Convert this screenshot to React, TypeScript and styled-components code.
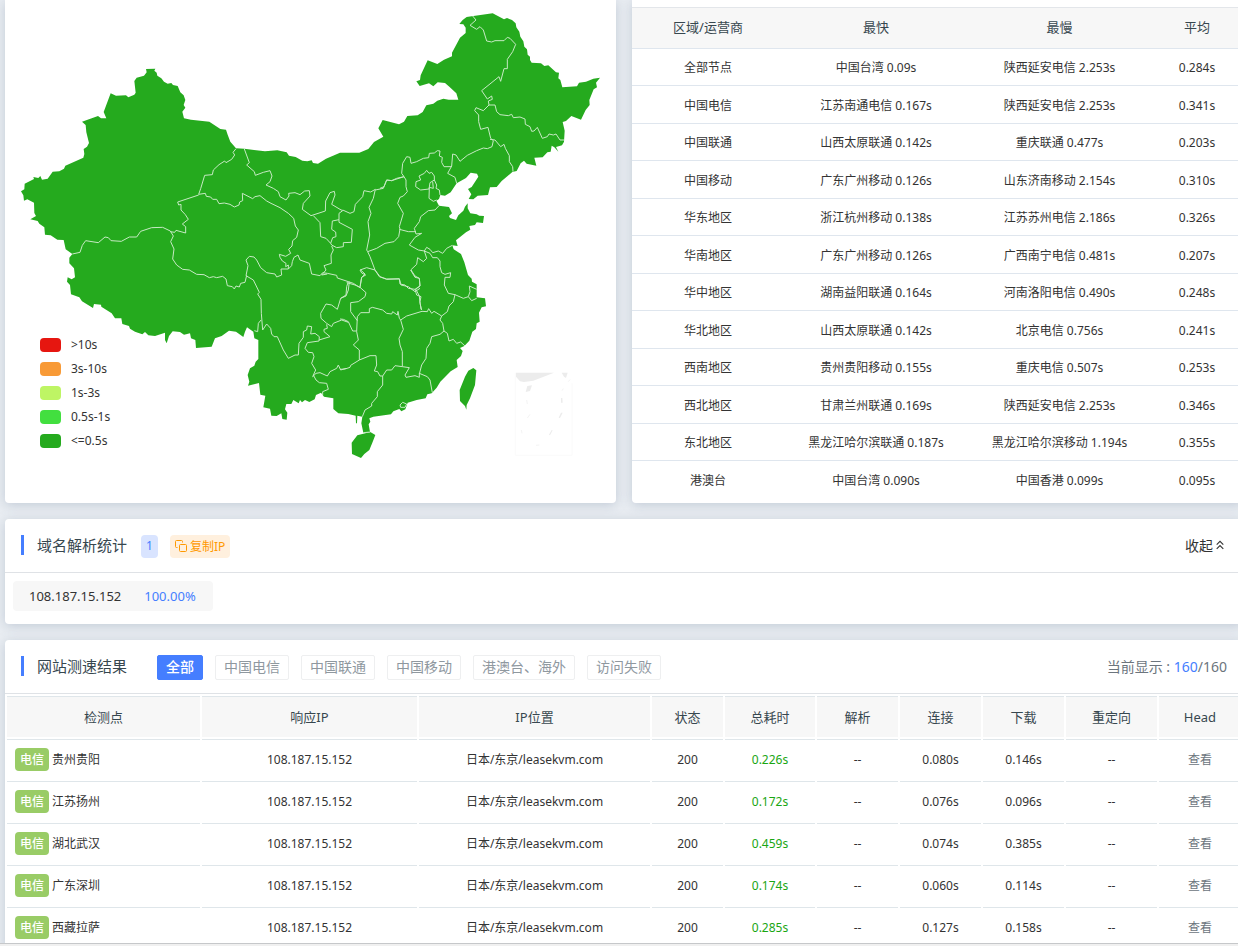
import React from 'react';
import styled, { createGlobalStyle } from 'styled-components';

const BLUE = '#457eff';
const GREEN = '#25aa1e';

const GlobalStyle = createGlobalStyle`
  *, *::before, *::after { box-sizing: border-box; }
  body {
    margin: 0;
    background: #e9edf2;
    color: #333;
    font-family: "Noto Sans", "Noto Sans CJK SC", sans-serif;
    font-size: 12px;
    line-height: 18px;
  }
  button { font-family: inherit; cursor: pointer; }
  a { text-decoration: none; }
`;

const Shell = styled.div`
  display: flex;
  flex-direction: column;
  height: 100vh;
  overflow: hidden;
`;

const Page = styled.main`
  flex: 1;
  min-height: 0;
  overflow: hidden;
`;

const Content = styled.div`
  display: flex;
  flex-direction: column;
  gap: 16px;
  margin-right: -5px;
  padding-left: 5px;
`;

const ScrollEdge = styled.div`
  flex: none;
  height: 3px;
  border-top: 1px solid #c6c8ca;
  background: #f0f0f0;
`;

const Overview = styled.div`
  display: grid;
  grid-template-columns: 1fr 1fr;
  gap: 16px;
`;

const Card = styled.section<{ $cut?: boolean }>`
  border-radius: ${(p) => (p.$cut ? '0 0 4px 4px' : '4px')};
  background: #fff;
  box-shadow: 0 2px 12px rgba(90, 110, 140, 0.27);
`;

const MapCard = styled(Card)`
  position: relative;
`;

const MapSvg = styled.svg`
  display: block;
  width: 100%;
`;

const Legend = styled.ul`
  position: absolute;
  left: 35px;
  bottom: 50px;
  display: flex;
  flex-direction: column;
  margin: 0;
  padding: 0;
  list-style: none;
`;

const LegendItem = styled.li`
  display: flex;
  align-items: center;
  gap: 10px;
  height: 24px;
  line-height: 20px;
`;

const Swatch = styled.span<{ $color: string }>`
  width: 21px;
  height: 14px;
  border-radius: 4px;
  background: ${(p) => p.$color};
`;

const RegionCard = styled(Card)`
  padding: 7px 0 4px;
`;

const RegionTable = styled.table`
  width: 100%;
  table-layout: fixed;
  border-spacing: 0;
  text-align: center;

  th, td { padding: 0; }
  th {
    height: 42px;
    padding-bottom: 2px;
    border-top: 1px solid #e3e6ea;
    border-bottom: 1px solid #dfe6ee;
    background: #f7f7f7;
    color: #37474f;
    font-size: 13px;
    font-weight: 400;
  }
  td {
    padding-top: 2px;
    border-bottom: 1px solid #dfe6ee;
  }
  tbody tr:nth-child(odd) td { height: 37px; }
  tbody tr:nth-child(even) td { height: 38px; }
  tbody tr:last-child td { border-bottom: 0; }
`;

const CardHeader = styled.header`
  display: flex;
  align-items: center;
  height: 54px;
  padding: 2px 16px 0;
  border-bottom: 1px solid #dfe2e6;
`;

const Title = styled.h2`
  display: flex;
  align-items: flex-start;
  gap: 13px;
  height: 23px;
  margin: 0;
  color: #37474f;
  font-size: 15px;
  font-weight: 400;
  line-height: 20px;

  &::before {
    content: "";
    width: 3px;
    height: 20px;
    background: ${BLUE};
  }
`;

const Count = styled.span`
  margin: 0 12px 0 14px;
  padding-bottom: 1px;
  width: 17px;
  border-radius: 4px;
  background: #d9e4ff;
  color: ${BLUE};
  line-height: 22px;
  text-align: center;
`;

const CopyButton = styled.button`
  display: flex;
  align-items: center;
  gap: 3px;
  height: 23px;
  padding: 0 5px 1px;
  border: 0;
  border-radius: 4px;
  background: #fff0de;
  color: #ff9900;
  font-size: 12px;
  white-space: nowrap;
`;

const CollapseButton = styled.button`
  display: flex;
  align-items: center;
  gap: 3px;
  margin-left: auto;
  padding: 0 3px 4px;
  border: 0;
  background: none;
  color: #333;
  font-size: 14px;
`;

const ChipRow = styled.div`
  display: flex;
  padding: 8px 8px 13px;
`;

const IpChip = styled.div`
  display: flex;
  gap: 23px;
  width: 200px;
  padding: 0 16px;
  border-radius: 4px;
  background: #f7f7f7;
  font-size: 13px;
  line-height: 30px;
`;

const Accent = styled.span`
  color: ${BLUE};
`;

const Filters = styled.nav`
  display: flex;
  gap: 12px;
  margin-left: 30px;
`;

const FilterButton = styled.button<{ $active: boolean }>`
  height: 25px;
  padding: 0 8px 2px;
  border: 1px solid ${(p) => (p.$active ? BLUE : '#eeeff0')};
  border-radius: 2px;
  background: ${(p) => (p.$active ? BLUE : '#fff')};
  color: ${(p) => (p.$active ? '#fff' : '#8f989f')};
  font-size: 14px;
  font-weight: ${(p) => (p.$active ? 500 : 400)};
  line-height: 21px;
  white-space: nowrap;
`;

const Shown = styled.span`
  margin-left: auto;
  padding-bottom: 2px;
  color: #6c757d;
  font-size: 14px;
`;

const ResultTable = styled.table`
  width: 100%;
  table-layout: fixed;
  border-spacing: 2px;
  text-align: center;

  th, td { padding: 0; border-top: 1px solid #dfe6ea; }
  th {
    height: 41px;
    background: #f7f7f7;
    color: #37474f;
    font-size: 13px;
    font-weight: 400;
  }
  td { height: 40px; }
`;

const Node = styled.div`
  display: flex;
  align-items: center;
  gap: 3px;
  padding-left: 8px;
`;

const Carrier = styled.span`
  padding: 0 5px;
  border-radius: 4px;
  background: #99cc66;
  color: #fff;
  font-weight: 500;
  line-height: 23px;
`;

const Total = styled.span`
  color: #1aa613;
`;

const HeadLink = styled.a`
  color: #6c757d;
`;

const legend = [
  ['#e61610', '>10s'],
  ['#f89a36', '3s-10s'],
  ['#bef564', '1s-3s'],
  ['#42df3f', '0.5s-1s'],
  [GREEN, '<=0.5s'],
];

const regions = [
  ['全部节点', '中国台湾 0.09s', '陕西延安电信 2.253s', '0.284s'],
  ['中国电信', '江苏南通电信 0.167s', '陕西延安电信 2.253s', '0.341s'],
  ['中国联通', '山西太原联通 0.142s', '重庆联通 0.477s', '0.203s'],
  ['中国移动', '广东广州移动 0.126s', '山东济南移动 2.154s', '0.310s'],
  ['华东地区', '浙江杭州移动 0.138s', '江苏苏州电信 2.186s', '0.326s'],
  ['华南地区', '广东广州移动 0.126s', '广西南宁电信 0.481s', '0.207s'],
  ['华中地区', '湖南益阳联通 0.164s', '河南洛阳电信 0.490s', '0.248s'],
  ['华北地区', '山西太原联通 0.142s', '北京电信 0.756s', '0.241s'],
  ['西南地区', '贵州贵阳移动 0.155s', '重庆电信 0.507s', '0.253s'],
  ['西北地区', '甘肃兰州联通 0.169s', '陕西延安电信 2.253s', '0.346s'],
  ['东北地区', '黑龙江哈尔滨联通 0.187s', '黑龙江哈尔滨移动 1.194s', '0.355s'],
  ['港澳台', '中国台湾 0.090s', '中国香港 0.099s', '0.095s'],
];

const filters = ['全部', '中国电信', '中国联通', '中国移动', '港澳台、海外', '访问失败'];

const columns: [string, number][] = [
  ['检测点', 193],
  ['响应IP', 215],
  ['IP位置', 231],
  ['状态', 71],
  ['总耗时', 90],
  ['解析', 81],
  ['连接', 81],
  ['下载', 81],
  ['重定向', 91],
  ['Head', 82],
];

const results = [
  ['贵州贵阳', '0.226s', '0.080s', '0.146s'],
  ['江苏扬州', '0.172s', '0.076s', '0.096s'],
  ['湖北武汉', '0.459s', '0.074s', '0.385s'],
  ['广东深圳', '0.174s', '0.060s', '0.114s'],
  ['西藏拉萨', '0.285s', '0.127s', '0.158s'],
];

const mainland =
  'M438,207 466,206 463,212 470,218 472,227 484,235 492,245 503,251 514,249 519,255 533,258 541,277 551,286 556,300 551,315 556,323 547,335 552,355 573,359 628,365 661,387 678,389 683,404 691,425 708,445 733,446 795,454 832,451 860,457 867,467 887,471 907,482 922,484 935,481 939,489 954,491 978,476 1020,458 1078,458 1105,447 1122,426 1150,410 1135,385 1148,360 1197,373 1212,365 1222,348 1253,346 1268,336 1279,316 1300,311 1312,302 1330,296 1346,299 1375,299 1369,280 1348,260 1335,249 1313,247 1300,259 1287,250 1259,258 1249,244 1260,240 1262,226 1283,181 1312,192 1332,179 1356,169 1356,158 1364,143 1380,113 1397,99 1397,83 1390,73 1378,72 1388,60 1400,51 1415,49 1478,40 1512,58 1521,54 1536,60 1547,70 1549,82 1558,95 1561,110 1570,124 1573,140 1581,148 1583,164 1590,170 1590,180 1595,188 1623,190 1633,198 1645,196 1668,217 1677,218 1675,235 1681,240 1687,262 1731,259 1737,248 1758,245 1780,236 1800,233 1788,248 1791,262 1781,268 1768,300 1769,315 1757,330 1743,359 1714,348 1698,363 1688,366 1694,392 1692,425 1686,436 1668,441 1675,455 1663,442 1655,437 1652,455 1642,457 1628,472 1603,473 1609,497 1580,491 1572,482 1562,490 1550,513 1537,516 1505,543 1490,561 1470,562 1464,585 1433,587 1420,598 1406,597 1414,583 1404,567 1415,561 1435,530 1431,521 1412,518 1398,534 1370,550 1352,577 1335,587 1321,585 1317,597 1309,602 1317,617 1347,621 1356,640 1347,648 1350,654 1368,660 1375,646 1390,632 1395,620 1403,610 1403,625 1411,640 1430,643 1438,647 1452,648 1449,669 1430,667 1425,675 1408,678 1411,689 1398,697 1368,721 1373,738 1357,736 1361,748 1383,762 1393,787 1404,825 1415,836 1416,845 1430,853 1430,892 1455,895 1458,919 1445,922 1437,938 1439,965 1430,970 1428,987 1417,995 1408,1022 1393,1038 1380,1044 1388,1053 1383,1068 1370,1080 1373,1101 1352,1114 1321,1145 1310,1163 1295,1180 1282,1183 1277,1195 1250,1200 1223,1208 1216,1228 1204,1234 1198,1227 1180,1234 1173,1243 1120,1250 1108,1255 1111,1265 1106,1273 1110,1296 1090,1298 1084,1270 1087,1250 1072,1247 1071,1270 1068,1270 1067,1247 1045,1242 1015,1240 1000,1227 1000,1195 972,1190 963,1178 948,1185 944,1198 928,1206 915,1200 906,1207 900,1200 896,1210 880,1200 874,1212 859,1212 855,1228 862,1238 860,1259 847,1257 844,1240 830,1248 814,1247 810,1226 790,1222 796,1187 781,1184 777,1149 744,1157 748,1145 743,1125 750,1105 763,1097 767,1085 775,1077 775,1020 763,1015 760,995 741,982 735,995 730,1011 708,995 687,992 665,1008 645,1015 635,1040 588,1044 586,1020 573,1015 570,1000 552,1004 540,996 518,994 507,1008 500,1030 495,1020 495,998 465,1008 445,1006 435,996 427,1003 405,995 390,986 387,978 367,972 364,955 345,955 335,940 304,920 303,914 282,912 279,924 246,904 238,892 213,883 210,855 201,845 203,832 215,838 225,832 222,805 208,790 208,773 217,762 197,748 191,720 172,719 152,706 135,704 133,682 118,671 113,663 91,658 108,648 103,639 102,608 82,598 72,602 70,586 63,574 73,568 74,551 102,537 100,531 115,534 121,528 126,539 143,536 158,515 178,514 192,506 196,497 250,473 253,462 251,447 261,440 267,429 259,397 257,375 246,365 294,348 303,355 319,355 311,336 332,280 348,287 378,286 385,292 403,284 407,278 403,243 410,233 432,227 440,217Z';

const hainan = 'M1111,1296 1126,1305 1117,1328 1108,1350 1093,1362 1083,1374 1056,1362 1055,1328 1072,1306Z';
const taiwan = 'M1420,1104 1429,1111 1425,1155 1410,1195 1400,1215 1399,1229 1395,1218 1380,1203 1379,1170 1395,1130 1405,1112Z';

// Province borders, grouped by the part of the country they run through.
const borders: { x: number; y: number; d: string }[] = [
  {
    x: 0,
    y: 120,
    d: 'M708,326 699,337 704,345 695,358 678,368 674,363 657,374 640,390 637,404 614,406 602,446 596,463 M596,465 533,486 536,495 543,493 543,510 556,524 565,538 547,552 557,560 557,579 528,571 524,577 511,575 M217,642 240,637 247,616 257,602 295,608 315,591 325,593 333,602 364,604 388,591 410,591 422,574 455,563 488,562 511,573 520,588 512,605 522,627 518,657 530,675 548,688 568,690 590,703 612,704 628,713 640,710 650,713 668,709 678,717 682,737 697,740 703,747 708,738 718,741 722,730 735,727 740,706 M596,463 616,460 619,469 632,471 638,478 650,478 657,491 673,489 690,493 703,501 717,495 719,486 728,482 727,460',
  },
  {
    x: 660,
    y: 360,
    d: 'M67,220 98,236 105,230 120,227 140,243 153,250 180,263 205,280 221,295 226,318 235,330 230,352 218,362 216,378 206,388 212,400 197,409 178,403 180,412 187,423 198,430 197,440 205,435 205,447 183,447 185,465 170,471 165,462 140,458 122,443 110,420 102,411 88,409 78,420 84,437 78,467 M205,447 215,437 217,425 222,412 234,405 240,420 268,430 275,462 300,467 308,458 322,460 350,466 352,474 385,485 400,490 420,503 M73,87 88,128 80,135 103,155 106,166 130,157 150,152 156,168 150,185 138,195 160,205 175,215 180,230 198,240 207,228 206,220 225,218 240,224 254,213 268,212 270,228 250,250 247,268 273,287 316,273 317,243 330,218 343,214 345,225 335,253 360,268 368,272 357,280 357,299 M280,287 300,308 302,350 318,355 332,370 338,353 348,350 347,336 335,328 337,303 357,299 357,307 397,328 394,367 370,368 370,380 350,383 335,375 332,370 M368,270 390,280 402,275 406,253 428,230 432,212 452,216 466,208 M335,378 340,390 333,405 334,430 312,437 318,450 305,465 322,462 M466,208 460,235 447,262 453,280 444,305 449,345 440,390 443,395 450,410 465,450 M420,503 425,472 437,465 425,459 420,450 440,443 465,450 M466,210 490,205 500,180 515,182 530,175 552,170 558,180 558,200 562,215 550,228 540,232 533,250 550,280 538,320 540,327 536,350 522,365 495,370 470,385 443,395 M465,450 478,470 500,478 538,476 543,495 565,500 585,515 600,505 M385,485 380,500 378,525 362,535',
  },
  {
    x: 1140,
    y: 0,
    d: 'M278,48 288,60 270,76 290,88 300,80 310,90 320,123 335,126 345,122 372,122 382,112 390,115 407,133 398,155 382,178 382,206 372,206 362,244 357,230 305,272 322,297 335,288 337,298 325,303 327,315 310,332 288,323 284,332 296,345 296,365 302,388 324,382 332,415 340,422 M327,315 345,315 350,335 360,344 385,347 395,343 400,353 420,351 435,357 436,373 450,380 455,394 462,393 472,382 487,415 502,410 507,402 520,405 528,402 540,420 552,420 M330,418 345,420 362,440 372,433 376,445 388,467 388,485 398,500 399,515 M340,422 336,440 322,446 310,444 290,452 262,466 240,484 228,465 218,462 215,498 203,520 225,532 230,550 M215,500 192,500 185,487 187,472 178,468 180,453 172,452 163,459 148,460 146,473 130,475 110,485 93,490 90,472 80,470 68,490 65,520 72,530 M140,511 147,520 155,517 163,528 163,540 150,548 147,567 122,570 107,560 108,545 122,540 117,528 133,520 140,511 M158,545 160,565 148,562 147,595 160,604 170,600 M163,540 170,555 168,565 178,570 180,585 M0,565 12,560 20,540 35,542 72,530',
  },
  {
    x: 1140,
    y: 480,
    d: 'M177,137 165,150 145,152 122,170 118,185 103,205 108,222 125,220 105,232 88,255 115,270 133,273 140,262 150,268 158,278 175,273 188,280 200,265 217,256 M58,208 85,215 108,215 M133,273 140,295 130,305 113,293 110,313 92,330 105,352 118,355 120,378 107,387 118,408 120,430 125,450 M133,273 150,280 158,293 172,293 180,303 180,320 185,338 195,343 212,338 210,352 195,352 193,375 205,400 225,404 250,415 265,410 270,395 268,378 290,388 M265,410 275,422 290,415',
  },
  {
    x: 1020,
    y: 810,
    d: 'M345,74 340,95 327,108 322,125 305,138 M243,118 240,95 243,80 230,75 225,58 205,55 195,45 180,42 178,27 140,27 120,20 105,0 M225,58 240,48 238,25 225,18 213,0 M182,150 200,138 246,124 262,125 266,116 275,130 282,124 305,138 300,150 308,160 312,183 322,190 327,213 340,208 350,220 362,216 375,228 M312,183 300,193 275,200 270,220 260,235 258,265 245,285 238,312 M182,150 190,178 177,205 180,225 187,245 187,290 165,287 155,300 140,300 128,318 M187,290 208,293 195,315 198,322 225,317 238,322 238,310 262,320 270,330 277,368 M52,140 62,128 88,128 88,116 97,112 128,120 140,130 155,132 158,125 172,135 174,124 178,145 182,150 M52,140 50,185 55,210 40,225 58,240 58,270 90,257 108,257 110,285 103,303 113,305 120,318 128,318 128,345 112,365 112,380 95,400 95,408 75,420 67,440 M0,298 15,297 30,292 32,286 58,270 M20,38 45,45 60,52 78,68 75,80 55,95 32,98 32,125 52,152 M60,50 65,22 75,12 62,0 M180,405 188,397 200,402 195,412 182,412 180,405 M0,147 10,148 25,155 38,183 50,183 M70,488 91,486',
  },
  {
    x: 660,
    y: 780,
    d: 'M78,47 100,60 118,97 113,102 123,118 124,160 128,210 140,192 152,205 155,222 162,230 172,230 190,270 205,295 225,285 235,285 237,250 250,232 250,215 260,210 262,198 275,200 272,222 285,220 298,230 297,243 262,248 255,265 265,277 278,278 282,290 275,310 287,330 278,350 288,340 300,338 322,348 330,335 350,325 355,315 362,330 378,325 M103,212 113,215 115,190 123,180 M388,65 385,90 378,108 362,115 352,148 335,135 318,132 302,160 303,175 320,190 335,200 340,190 365,180 385,187 M297,240 330,230 312,215 312,208 322,205 320,193 M280,345 288,360 298,368 320,370 325,388 308,395 308,405',
  },
];

const seaShapes =
  'M1548,1118 1662,1118 1600,1142 1572,1146 1560,1144 1548,1130Z M1685,1118 1703,1118 1698,1134 1692,1130Z M1582,1158 1596,1156 1590,1173 1577,1176Z M1683,1194 1687,1194 1688,1208 1683,1208Z M1683,1238 1688,1238 1680,1254 1676,1253Z M1655,1290 1658,1291 1650,1306 1647,1304Z';

function ChinaMap() {
  return (
    <MapSvg viewBox="15 0 1833 1509" role="img" aria-label="中国测速地图">
      <g fill={GREEN}>
        <path d={mainland} />
        <path d={hainan} />
        <path d={taiwan} />
      </g>
      <g fill="none" stroke="#c6eac3" strokeWidth="3" strokeLinejoin="round">
        {borders.map((b) => (
          <path key={`${b.x}-${b.y}`} transform={`translate(${b.x} ${b.y})`} d={b.d} />
        ))}
      </g>
      <path d="M1546,1118V1366H1716V1150" fill="none" stroke="#fafafa" strokeWidth="3" />
      <path d={seaShapes} fill="#ececec" />
      <path
        d="M1580,1200 1582,1212 M1582,1254 1590,1243 M1564,1290 1566,1300 M1608,1336 1618,1335 M1686,1172 1690,1166 M1705,1145 1710,1139"
        fill="none"
        stroke="#f4f4f4"
        strokeWidth="3"
      />
    </MapSvg>
  );
}

function CopyIcon() {
  return (
    <svg width="12" height="12" viewBox="0 0 12 12" fill="none" stroke="currentColor" aria-hidden="true">
      <rect x="4.500" y="4.500" width="7" height="7" rx="1" />
      <path d="M2.500 7.500H1.500a1 1 0 0 1-1-1v-5a1 1 0 0 1 1-1h5a1 1 0 0 1 1 1v1" />
    </svg>
  );
}

function CollapseIcon() {
  return (
    <svg width="8" height="10" viewBox="0 0 8 10" fill="none" stroke="currentColor" strokeWidth="1.1" aria-hidden="true">
      <path d="M.7 4.600 4 1.300 7.300 4.600M.7 8.900 4 5.600 7.300 8.900" />
    </svg>
  );
}

export default function App() {
  const [active, setActive] = React.useState(filters[0]);

  return (
    <Shell>
      <GlobalStyle />
      <Page>
        <Content>
          <Overview>
            <MapCard $cut>
              <ChinaMap />
              <Legend>
                {legend.map(([color, label]) => (
                  <LegendItem key={label}>
                    <Swatch $color={color} />
                    {label}
                  </LegendItem>
                ))}
              </Legend>
            </MapCard>

            <RegionCard $cut>
              <RegionTable>
                <colgroup>
                  <col style={{ width: 152 }} />
                  <col style={{ width: 184 }} />
                  <col style={{ width: 183 }} />
                  <col style={{ width: 92 }} />
                </colgroup>
                <thead>
                  <tr>
                    <th>区域/运营商</th>
                    <th>最快</th>
                    <th>最慢</th>
                    <th>平均</th>
                  </tr>
                </thead>
                <tbody>
                  {regions.map((row) => (
                    <tr key={row[0]}>
                      {row.map((cell, i) => (
                        <td key={i}>{cell}</td>
                      ))}
                    </tr>
                  ))}
                </tbody>
              </RegionTable>
            </RegionCard>
          </Overview>

          <Card>
            <CardHeader>
              <Title>域名解析统计</Title>
              <Count>1</Count>
              <CopyButton type="button">
                <CopyIcon />
                复制IP
              </CopyButton>
              <CollapseButton type="button">
                收起
                <CollapseIcon />
              </CollapseButton>
            </CardHeader>
            <ChipRow>
              <IpChip>
                <span>108.187.15.152</span>
                <Accent>100.00%</Accent>
              </IpChip>
            </ChipRow>
          </Card>

          <Card>
            <CardHeader>
              <Title>网站测速结果</Title>
              <Filters>
                {filters.map((name) => (
                  <FilterButton key={name} type="button" $active={name === active} onClick={() => setActive(name)}>
                    {name}
                  </FilterButton>
                ))}
              </Filters>
              <Shown>
                当前显示 : <Accent>160</Accent>/160
              </Shown>
            </CardHeader>
            <ResultTable>
              <colgroup>
                {columns.map(([name, width]) => (
                  <col key={name} style={{ width }} />
                ))}
              </colgroup>
              <thead>
                <tr>
                  {columns.map(([name]) => (
                    <th key={name}>{name}</th>
                  ))}
                </tr>
              </thead>
              <tbody>
                {results.map(([place, total, connect, download]) => (
                  <tr key={place}>
                    <td>
                      <Node>
                        <Carrier>电信</Carrier>
                        {place}
                      </Node>
                    </td>
                    <td>108.187.15.152</td>
                    <td>日本/东京/leasekvm.com</td>
                    <td>200</td>
                    <td>
                      <Total>{total}</Total>
                    </td>
                    <td>--</td>
                    <td>{connect}</td>
                    <td>{download}</td>
                    <td>--</td>
                    <td>
                      <HeadLink href="#head">查看</HeadLink>
                    </td>
                  </tr>
                ))}
              </tbody>
            </ResultTable>
          </Card>
        </Content>
      </Page>
      <ScrollEdge />
    </Shell>
  );
}
